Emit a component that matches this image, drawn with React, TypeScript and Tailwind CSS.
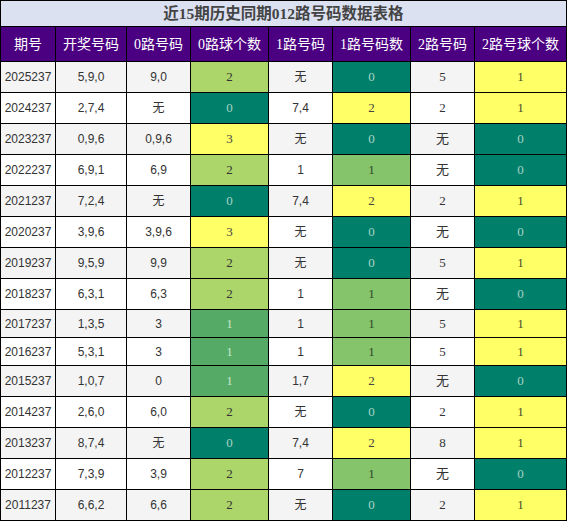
import React from "react";

type Row = [string, string, string, string, string, string, string, string];

const rows: Row[] = [
  ["2025237", "5,9,0", "9,0", "2", "无", "0", "5", "1"],
  ["2024237", "2,7,4", "无", "0", "7,4", "2", "2", "1"],
  ["2023237", "0,9,6", "0,9,6", "3", "无", "0", "无", "0"],
  ["2022237", "6,9,1", "6,9", "2", "1", "1", "无", "0"],
  ["2021237", "7,2,4", "无", "0", "7,4", "2", "2", "1"],
  ["2020237", "3,9,6", "3,9,6", "3", "无", "0", "无", "0"],
  ["2019237", "9,5,9", "9,9", "2", "无", "0", "5", "1"],
  ["2018237", "6,3,1", "6,3", "2", "1", "1", "无", "0"],
  ["2017237", "1,3,5", "3", "1", "1", "1", "5", "1"],
  ["2016237", "5,3,1", "3", "1", "1", "1", "5", "1"],
  ["2015237", "1,0,7", "0", "1", "1,7", "2", "无", "0"],
  ["2014237", "2,6,0", "6,0", "2", "无", "0", "2", "1"],
  ["2013237", "8,7,4", "无", "0", "7,4", "2", "8", "1"],
  ["2012237", "7,3,9", "3,9", "2", "7", "1", "无", "0"],
  ["2011237", "6,6,2", "6,6", "2", "无", "0", "2", "1"],
];

const headers = ["期号", "开奖号码", "0路号码", "0路球个数", "1路号码", "1路号码数", "2路号码", "2路号球个数"];

const sans = "font-['Liberation_Sans','Noto_Sans_CJK_SC',sans-serif]";
const serif = "font-['Liberation_Serif','Noto_Sans_CJK_SC',serif]";

function countCls(col: number, v: string): string {
  if (col === 3) {
    if (v === "0") return "bg-[#00806a] text-[#a9d3c6]";
    if (v === "1") return "bg-[#55aa66] text-[#c6e6c8]";
    if (v === "2") return "bg-[#acd66a] text-[#333]";
    return "bg-[#ffff66] text-[#444]";
  }
  if (col === 5) {
    if (v === "0") return "bg-[#00806a] text-[#a9d3c6]";
    if (v === "1") return "bg-[#85c46a] text-[#2f4a2a]";
    return "bg-[#ffff66] text-[#444]";
  }
  if (v === "0") return "bg-[#00806a] text-[#a9d3c6]";
  return "bg-[#ffff66] text-[#4a4a30]";
}

export default function App() {
  return (
    <div className="w-[567px] h-[521px] overflow-hidden bg-white">
      <div className="grid grid-cols-[54px_70px_63px_77px_63px_77px_63px_91px] gap-px bg-black border border-black w-[567px]">
        <div
          className={`col-span-8 h-[25px] bg-[#dbe1f1] flex items-center justify-center text-[15.5px] font-bold text-[#444] ${serif}`}
        >
          近15期历史同期012路号码数据表格
        </div>
        {headers.map((h) => (
          <div
            key={h}
            className={`h-[34px] bg-[#4b0082] text-white text-[14px] flex items-center justify-center ${serif}`}
          >
            {h}
          </div>
        ))}
        {rows.map((r, i) => {
          const h = i === 8 || i === 9 ? "h-[27px]" : "h-[30px]";
          const bg = i % 2 === 0 ? "bg-[#f4f4f4]" : "bg-white";
          return r.map((v, c) => {
            const isCount = c === 3 || c === 5 || c === 7;
            const font = c <= 2 || c === 4 ? `${sans} text-[12px]` : `${serif} text-[13px]`;
            const color = isCount ? countCls(c, v) : `${bg} text-[#333]`;
            return (
              <div
                key={`${i}-${c}`}
                className={`${h} ${color} ${font} flex items-center justify-center`}
              >
                {v}
              </div>
            );
          });
        })}
      </div>
    </div>
  );
}
